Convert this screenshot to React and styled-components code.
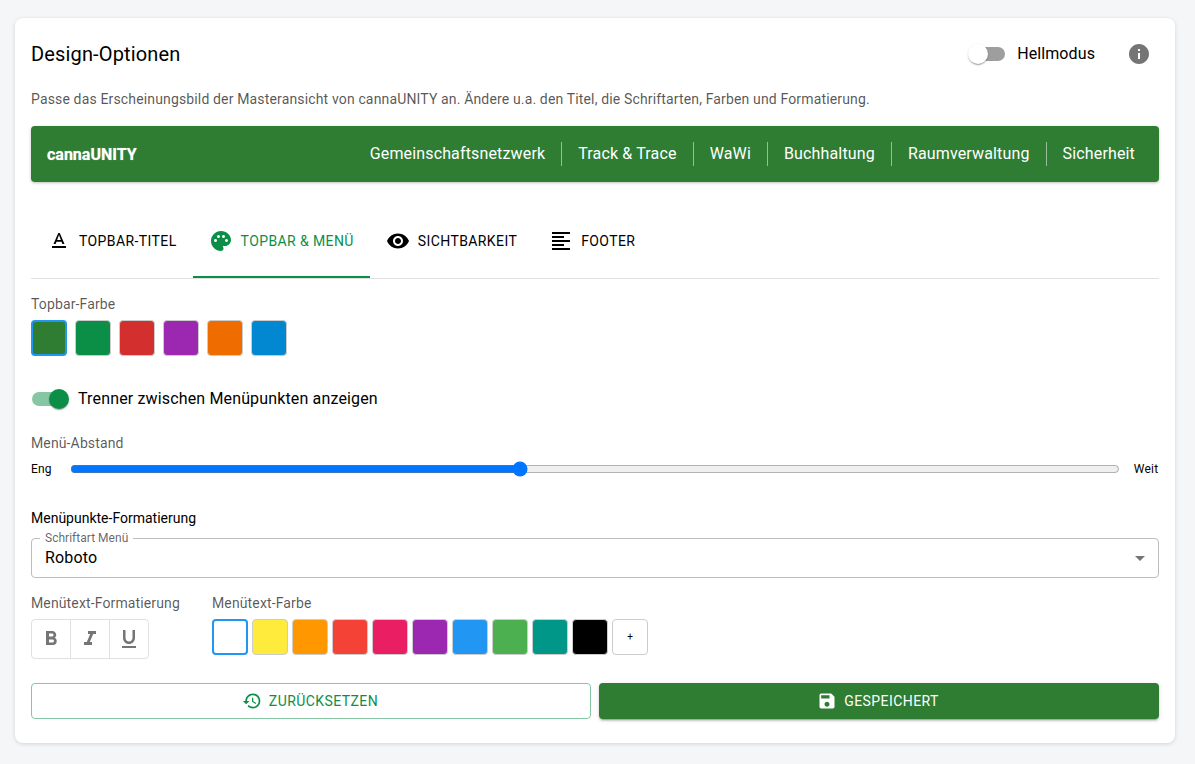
import React from 'react';
import styled, { createGlobalStyle } from 'styled-components';

const Global = createGlobalStyle`
  html, body { margin: 0; padding: 0; background: #f4f6f8; }
  body { font-family: Roboto, "Liberation Sans", sans-serif; color: #000; }
  * { box-sizing: border-box; }
`;
const GREEN = '#0b8f47';
const Page = styled.div`width: 1195px; height: 764px; padding: 18px 20px 21px 15px;`;
const Card = styled.main`
  width: 1160px; height: 725px; background: #fff; border-radius: 8px; padding: 16px;
  box-shadow: 0 1px 4px rgba(0,0,0,.14);
`;
const Header = styled.header`display: flex; align-items: center; height: 40px; margin-bottom: 15px;`;
const Title = styled.h2`flex: 1; margin: 0; font-size: 20px; font-weight: 400; line-height: 40px; letter-spacing: .15px; color: #000;`;
const HeaderLabel = styled.span`font-size: 16px; line-height: 24px; margin-left: 12px; letter-spacing: .1px; color: #000;`;
const SwitchTrack = styled.span`
  position: relative; display: block; width: 34px; height: 14px; border-radius: 7px;
  background: ${p => p.$on ? '#85c7a3' : '#9e9e9e'};
`;
const SwitchThumb = styled.span`
  position: absolute; top: -3px; ${p => p.$on ? 'right: -3px;' : 'left: -3px;'}
  width: 20px; height: 20px; border-radius: 50%;
  background: ${p => p.$on ? GREEN : '#fff'};
  box-shadow: 0 2px 1px -1px rgba(0,0,0,.2), 0 1px 1px rgba(0,0,0,.14), 0 1px 3px rgba(0,0,0,.12);
`;
const InfoButton = styled.span`display: flex; margin-left: 32px; margin-right: 8px; width: 24px; height: 24px; color: #757575;`;
const Description = styled.p`margin: 0 0 17px; font-size: 14px; line-height: 20px; letter-spacing: .15px; color: rgba(0,0,0,.68);`;
const PreviewBar = styled.nav`
  display: flex; align-items: center; justify-content: space-between; height: 56px; padding: 0 8px 0 16px;
  background: #2e7d32; border-radius: 4px; color: #fff;
  box-shadow: 0 1px 3px rgba(0,0,0,.25);
`;
const Brand = styled.span`font-size: 16px; font-weight: 700; color: #fff; text-shadow: 0 0 1px rgba(255,255,255,.6);`;
const NavList = styled.div`display: flex; align-items: center;`;
const NavItem = styled.span`
  display: block; padding: 0 16px; font-size: 16px; font-weight: 400; line-height: 24px; letter-spacing: .15px; color: #fff;
  ${p => p.$divider ? 'border-right: 1px solid rgba(255,255,255,.5);' : ''}
`;
const Tabs = styled.div`display: flex; margin-top: 23px; height: 74px; border-bottom: 1px solid #e0e0e0;`;
const Tab = styled.div`
  display: flex; align-items: center; gap: 8px; height: 73px; padding: 0 16px;
  font-size: 14px; font-weight: 400; letter-spacing: .4px; text-transform: uppercase;
  color: ${p => p.$active ? GREEN : '#000'};
  border-bottom: 2px solid ${p => p.$active ? GREEN : 'transparent'};
  svg { color: ${p => p.$active ? GREEN : '#000'}; }
`;
const Icon = styled.svg`display: block; flex: none; fill: currentColor;`;
const FieldLabel = styled.div`font-size: 14px; line-height: 20px; letter-spacing: .13px; color: rgba(0,0,0,.66);`;
const TopbarSection = styled.section`margin-top: 15px;`;
const SwatchRow = styled.div`display: flex; gap: ${p => p.$gap}px; margin-top: 6px;`;
const Swatch = styled.div`
  width: 36px; height: 36px; border-radius: 4px; background: ${p => p.$color};
  border: ${p => p.$selected ? '2px solid #2196f3' : '1px solid #ccc'};
`;
const AddSwatch = styled.div`
  display: flex; align-items: center; justify-content: center; width: 36px; height: 36px; padding-bottom: 2px;
  border-radius: 4px; border: 1px solid #ccc; background: #fff; font-size: 10px; color: #000;
`;
const ToggleRow = styled.div`display: flex; align-items: center; margin: 31px 0 0 1px; height: 24px;`;
const ToggleLabel = styled.span`margin-left: 12px; font-size: 16px; line-height: 24px; letter-spacing: .15px; color: #000;`;
const SliderSection = styled.section`margin-top: 22px;`;
const SliderRow = styled.div`display: flex; align-items: center; margin-top: 4px; height: 24px;`;
const SliderEnd = styled.span`font-size: 12px; line-height: 16px; letter-spacing: .2px; color: #000;`;
const Range = styled.input`display: block; flex: none; width: 1050px; height: 16px; margin: 0 14px 0 18px;`;
const SectionTitle = styled.div`margin-top: 27px; font-size: 14px; line-height: 20px; color: #000;`;
const Fieldset = styled.fieldset`
  display: flex; align-items: center; justify-content: space-between; height: 47px; margin: 3px 0 0;
  padding: 0 8px 6px 13px; border: 1px solid #bdbdbd; border-radius: 4px;
`;
const Legend = styled.legend`padding: 0 5px; margin-left: -5px; font-size: 12px; line-height: 14px; letter-spacing: .02px; color: rgba(0,0,0,.62);`;
const SelectValue = styled.span`font-size: 16px; line-height: 24px; letter-spacing: .15px; color: #000;`;
const ArrowIcon = styled.span`display: flex; color: #757575; margin-right: -2px;`;
const FormatRow = styled.div`display: flex; margin-top: 15px;`;
const FormatColumn = styled.div`width: ${p => p.$w ? p.$w + 'px' : 'auto'};`;
const ButtonGroup = styled.div`
  display: flex; width: 118px; height: 40px; margin-top: 6px;
  border: 1px solid #e0e0e0; border-radius: 4px;
`;
const GroupButton = styled.div`
  flex: 1; display: flex; align-items: center; justify-content: center; color: #757575;
  & + & { border-left: 1px solid #e0e0e0; }
`;
const Actions = styled.div`display: grid; grid-template-columns: 560px 560px; gap: 8px; margin-top: 24px;`;
const ActionButton = styled.div`
  display: flex; align-items: center; justify-content: center; gap: 7px; height: 36px; border-radius: 4px; padding: 0 2px 1px 0;
  font-size: 14px; font-weight: 400; letter-spacing: .43px; text-transform: uppercase;
  ${p => p.$solid
    ? 'background: #2e7d32; color: #fff; box-shadow: 0 3px 1px -2px rgba(0,0,0,.2), 0 2px 2px rgba(0,0,0,.14), 0 1px 5px rgba(0,0,0,.12);'
    : `background: #fff; color: ${GREEN}; border: 1px solid #85c7a3;`}
`;

const P = {
  text: 'M5 17v2h14v-2H5zm4.5-4.2h5l.9 2.2h2.1L12.75 4h-1.5L6.5 15h2.1l.9-2.2zM12 5.98 13.87 11h-3.74L12 5.98z',
  palette: 'M12 2C6.49 2 2 6.49 2 12s4.49 10 10 10c1.38 0 2.5-1.12 2.5-2.5 0-.61-.23-1.2-.64-1.67-.08-.1-.13-.21-.13-.33 0-.28.22-.5.5-.5H16c3.31 0 6-2.69 6-6 0-4.96-4.49-9-10-9zm5.5 11c-.83 0-1.5-.67-1.5-1.5s.67-1.5 1.5-1.5 1.5.67 1.5 1.5-.67 1.5-1.5 1.5zm-3-4c-.83 0-1.5-.67-1.5-1.5S13.67 6 14.5 6s1.5.67 1.5 1.5S15.33 9 14.5 9zM5 11.5c0-.83.67-1.5 1.5-1.5s1.5.67 1.5 1.5S7.33 13 6.5 13 5 12.33 5 11.5zm6-4c0 .83-.67 1.5-1.5 1.5S8 8.33 8 7.5 8.67 6 9.5 6s1.5.67 1.5 1.5z',
  eye: 'M12 4.5C7 4.5 2.73 7.61 1 12c1.73 4.39 6 7.5 11 7.5s9.27-3.11 11-7.5c-1.73-4.39-6-7.5-11-7.5zM12 17c-2.76 0-5-2.24-5-5s2.24-5 5-5 5 2.24 5 5-2.24 5-5 5zm0-8c-1.66 0-3 1.34-3 3s1.34 3 3 3 3-1.34 3-3-1.34-3-3-3z',
  align: 'M15 15H3v2h12v-2zm0-8H3v2h12V7zM3 13h18v-2H3v2zm0 8h18v-2H3v2zM3 3v2h18V3H3z',
  info: 'M12 2C6.48 2 2 6.48 2 12s4.48 10 10 10 10-4.48 10-10S17.52 2 12 2zm1 15h-2v-6h2v6zm0-8h-2V7h2v2z',
  restore: 'M13 3c-4.97 0-9 4.03-9 9H1l3.89 3.89.07.14L9 12H6c0-3.87 3.13-7 7-7s7 3.13 7 7-3.13 7-7 7c-1.93 0-3.68-.79-4.94-2.06l-1.42 1.42C8.27 19.99 10.51 21 13 21c4.97 0 9-4.03 9-9s-4.03-9-9-9zm-1 5v5l4.28 2.54.72-1.21-3.5-2.08V8H12z',
  save: 'M17 3H5c-1.11 0-2 .9-2 2v14c0 1.1.89 2 2 2h14c1.1 0 2-.9 2-2V7l-4-4zm-5 16c-1.66 0-3-1.34-3-3s1.34-3 3-3 3 1.34 3 3-1.34 3-3 3zm3-10H5V5h10v4z',
  bold: 'M15.6 10.79c.97-.67 1.65-1.77 1.65-2.79 0-2.26-1.75-4-4-4H7v14h7.04c2.09 0 3.71-1.7 3.71-3.79 0-1.52-.86-2.82-2.15-3.42zM10 6.5h3c.83 0 1.5.67 1.5 1.5s-.67 1.5-1.5 1.5h-3v-3zm3.5 9H10v-3h3.5c.83 0 1.5.67 1.5 1.5s-.67 1.5-1.5 1.5z',
  italic: 'M10 4v3h2.21l-3.42 8H6v3h8v-3h-2.21l3.42-8H18V4z',
  underline: 'M12 17c3.31 0 6-2.69 6-6V3h-2.5v8c0 1.93-1.57 3.5-3.5 3.5S8.5 12.93 8.5 11V3H6v8c0 3.31 2.69 6 6 6zm-7 2v2h14v-2H5z',
  arrow: 'M7 10l5 5 5-5z',
};
const Glyph = ({ d, size = 24 }) => (
  <Icon width={size} height={size} viewBox="0 0 24 24" aria-hidden="true"><path d={d} /></Icon>
);

const topbarColors = ['#2e7d32', GREEN, '#d32f2f', '#9c27b0', '#ef6c00', '#0288d1'];
const textColors = ['#ffffff', '#ffeb3b', '#ff9800', '#f44336', '#e91e63', '#9c27b0', '#2196f3', '#4caf50', '#009688', '#000000'];
const nav = ['Gemeinschaftsnetzwerk', 'Track & Trace', 'WaWi', 'Buchhaltung', 'Raumverwaltung', 'Sicherheit'];
const tabs = [['Topbar-Titel', P.text], ['Topbar & Menü', P.palette, true], ['Sichtbarkeit', P.eye], ['Footer', P.align]];

export default function App() {
  return (
    <Page>
      <Global />
      <Card>
        <Header>
          <Title>Design-Optionen</Title>
          <SwitchTrack><SwitchThumb /></SwitchTrack>
          <HeaderLabel>Hellmodus</HeaderLabel>
          <InfoButton><Glyph d={P.info} /></InfoButton>
        </Header>
        <Description>Passe das Erscheinungsbild der Masteransicht von cannaUNITY an. Ändere u.a. den Titel, die Schriftarten, Farben und Formatierung.</Description>
        <PreviewBar>
          <Brand>cannaUNITY</Brand>
          <NavList>
            {nav.map((n, i) => <NavItem key={n} $divider={i < nav.length - 1}>{n}</NavItem>)}
          </NavList>
        </PreviewBar>
        <Tabs>
          {tabs.map(([label, d, active]) => (
            <Tab key={label} $active={active}><Glyph d={d} />{label}</Tab>
          ))}
        </Tabs>
        <TopbarSection>
          <FieldLabel>Topbar-Farbe</FieldLabel>
          <SwatchRow $gap={8}>
            {topbarColors.map((c, i) => <Swatch key={c} $color={c} $selected={i === 0} />)}
          </SwatchRow>
        </TopbarSection>
        <ToggleRow>
          <SwitchTrack $on><SwitchThumb $on /></SwitchTrack>
          <ToggleLabel>Trenner zwischen Menüpunkten anzeigen</ToggleLabel>
        </ToggleRow>
        <SliderSection>
          <FieldLabel>Menü-Abstand</FieldLabel>
          <SliderRow>
            <SliderEnd>Eng</SliderEnd>
            <Range type="range" min="0" max="100" value="42.8" step="0.1" readOnly />
            <SliderEnd>Weit</SliderEnd>
          </SliderRow>
        </SliderSection>
        <SectionTitle>Menüpunkte-Formatierung</SectionTitle>
        <Fieldset>
          <Legend>Schriftart Menü</Legend>
          <SelectValue>Roboto</SelectValue>
          <ArrowIcon><Glyph d={P.arrow} /></ArrowIcon>
        </Fieldset>
        <FormatRow>
          <FormatColumn $w={181}>
            <FieldLabel>Menütext-Formatierung</FieldLabel>
            <ButtonGroup>
              <GroupButton><Glyph d={P.bold} /></GroupButton>
              <GroupButton><Glyph d={P.italic} /></GroupButton>
              <GroupButton><Glyph d={P.underline} /></GroupButton>
            </ButtonGroup>
          </FormatColumn>
          <FormatColumn>
            <FieldLabel>Menütext-Farbe</FieldLabel>
            <SwatchRow $gap={4}>
              {textColors.map((c, i) => <Swatch key={c} $color={c} $selected={i === 0} />)}
              <AddSwatch>+</AddSwatch>
            </SwatchRow>
          </FormatColumn>
        </FormatRow>
        <Actions>
          <ActionButton><Glyph d={P.restore} size={20} />Zurücksetzen</ActionButton>
          <ActionButton $solid><Glyph d={P.save} size={20} />Gespeichert</ActionButton>
        </Actions>
      </Card>
    </Page>
  );
}
